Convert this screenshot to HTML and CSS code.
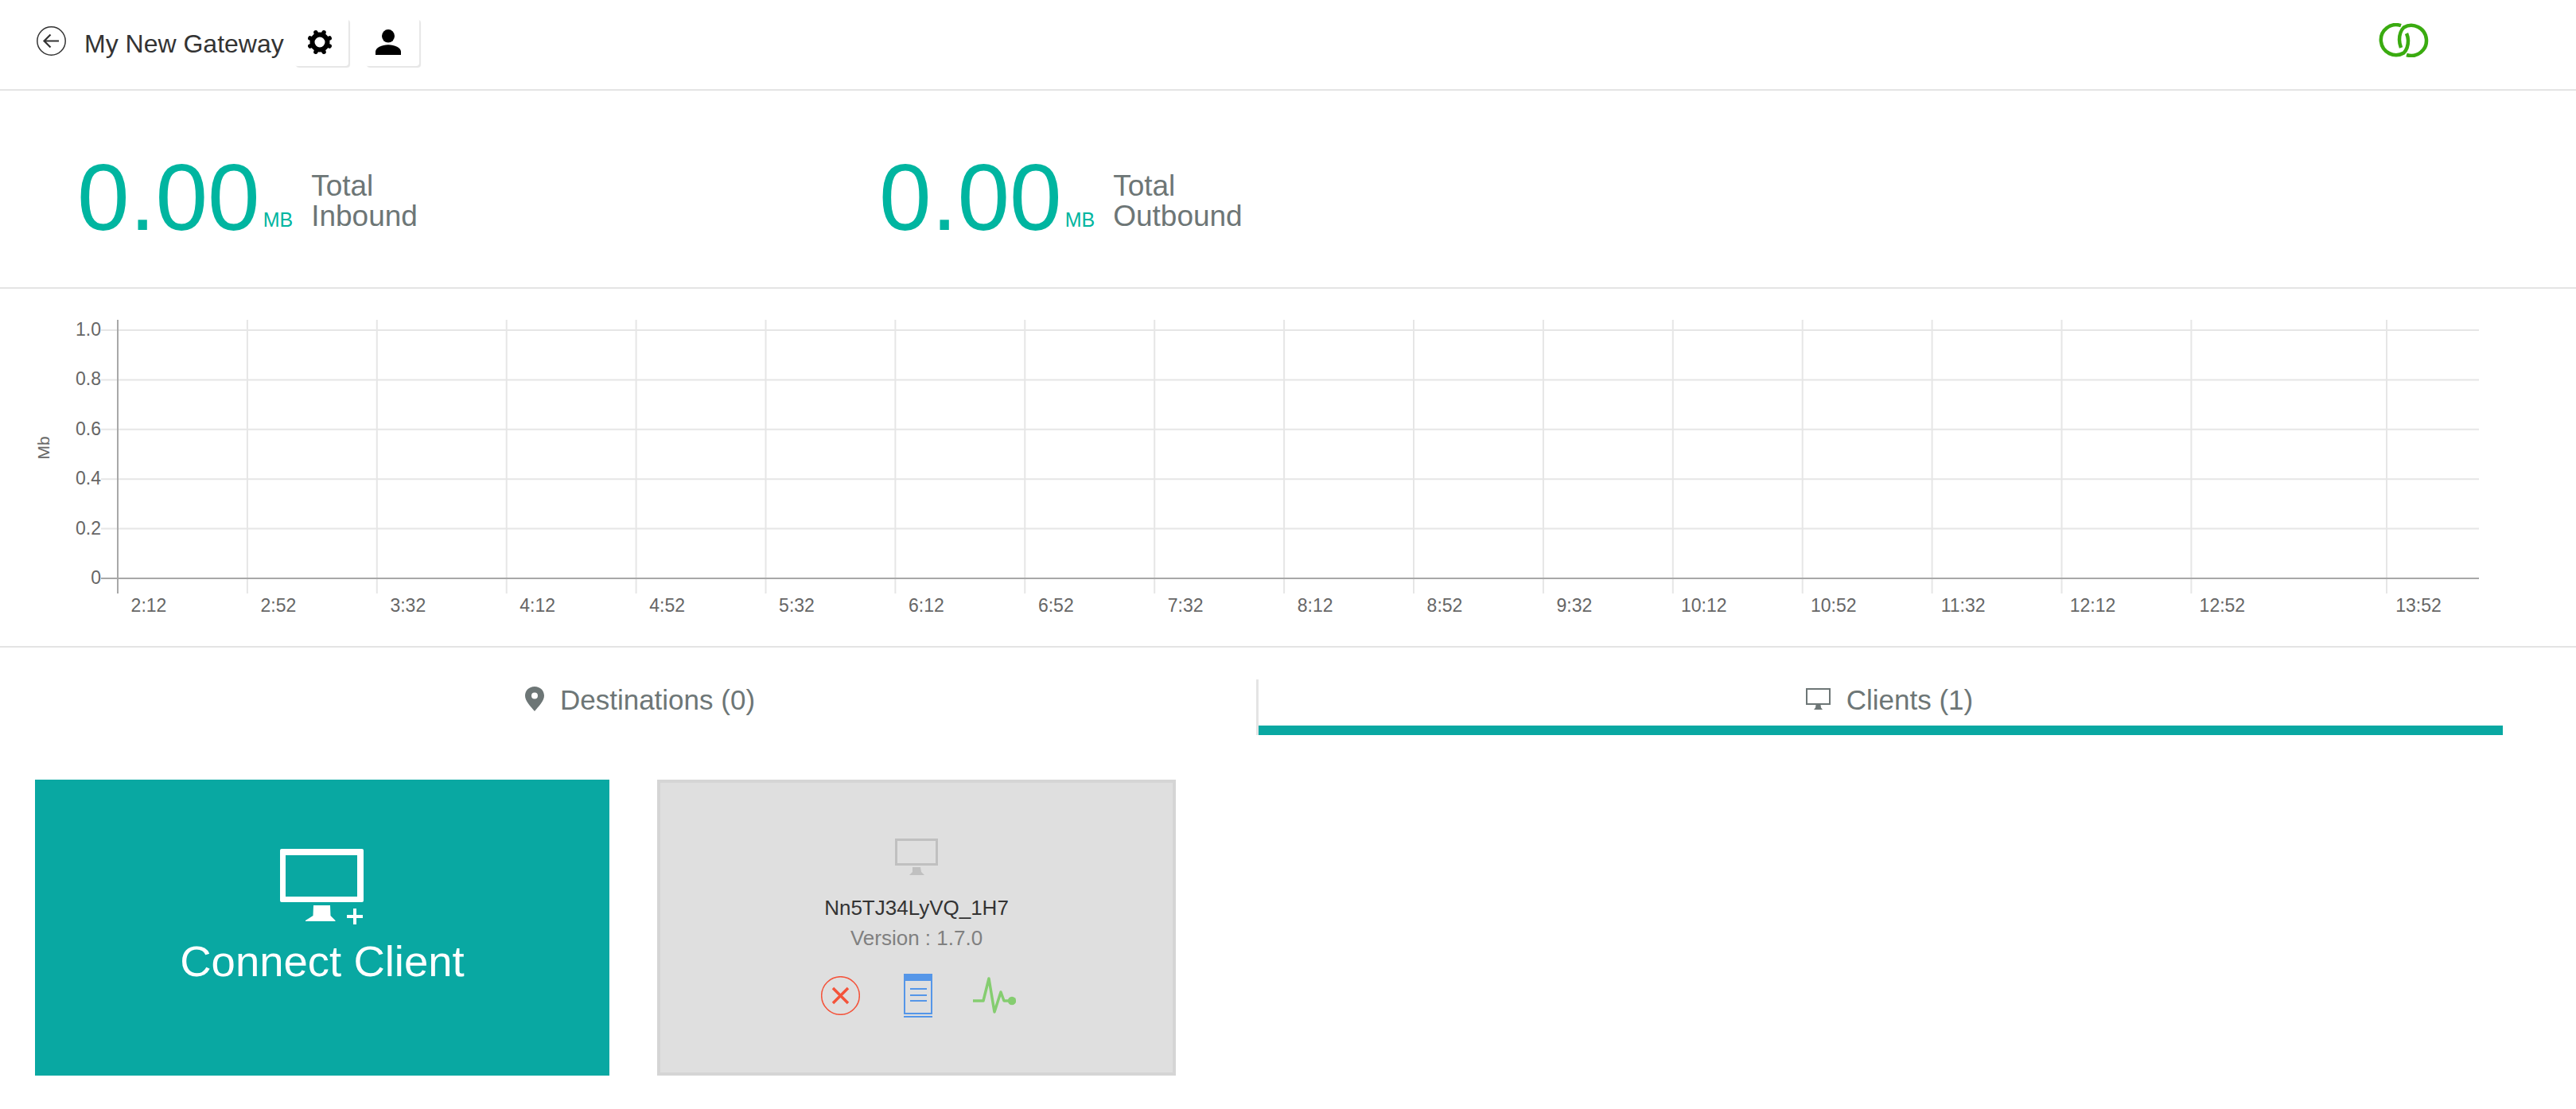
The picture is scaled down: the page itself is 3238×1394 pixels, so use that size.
FILE: index.html
```html
<!DOCTYPE html>
<html lang="en">
<head>
  <meta charset="UTF-8" />
  <title>My New Gateway</title>
  <link rel="stylesheet" href="styles.css">
</head>
<body>

  <header class="topbar">
    <svg class="back-icon" viewBox="0 0 37 37" width="37" height="37">
      <circle cx="18.5" cy="18.5" r="17.7" fill="none" stroke="#333" stroke-width="1.5"/>
      <path d="M28 18.5H10M17.5 10.5L9.5 18.5L17.5 26.5" fill="none" stroke="#333" stroke-width="2.2"/>
    </svg>
    <h1 class="title">My New Gateway</h1>
    <button class="icon-btn btn-settings">
      <svg viewBox="-16 -16 32 32" width="32" height="32">
        <circle r="9.500" fill="none" stroke="#000" stroke-width="6"/>
        <g stroke="#000" stroke-width="5.500" stroke-linecap="round">
          <path d="M0-11V-13.200" transform="rotate(22.500)"/>
          <path d="M0-11V-13.200" transform="rotate(67.500)"/>
          <path d="M0-11V-13.200" transform="rotate(112.500)"/>
          <path d="M0-11V-13.200" transform="rotate(157.500)"/>
          <path d="M0-11V-13.200" transform="rotate(202.500)"/>
          <path d="M0-11V-13.200" transform="rotate(247.500)"/>
          <path d="M0-11V-13.200" transform="rotate(292.500)"/>
          <path d="M0-11V-13.200" transform="rotate(337.500)"/>
        </g>
      </svg>
    </button>
    <button class="icon-btn btn-user">
      <svg viewBox="0 0 32 32" width="32" height="32">
        <ellipse cx="16" cy="8.300" rx="8" ry="8.300" fill="#000"/>
        <path fill="#000" d="M0 32v-4C0 23 8 19.300 16 19.300S32 23 32 28v4z"/>
      </svg>
    </button>
    <svg class="logo" viewBox="0 0 65 43" width="65" height="43">
      <g fill="none" stroke="#3aab10" stroke-width="4.500">
        <path d="M29 3.200A19 19 0 1 0 32.500 37.500C36 34 38 29 38 22C38 19 37.500 16.500 36 13"/>
        <path d="M36 40A19 19 0 1 0 32.500 5.500C29 9 27 14 27 21C27 24 27.500 27 29 31"/>
      </g>
    </svg>
  </header>

  <section class="stats">
    <div class="stat">
      <span class="stat-value">0.00</span>
      <span class="stat-unit">MB</span>
      <span class="stat-label">Total<br>Inbound</span>
    </div>
    <div class="stat">
      <span class="stat-value">0.00</span>
      <span class="stat-unit">MB</span>
      <span class="stat-label">Total<br>Outbound</span>
    </div>
  </section>

  <section class="chart">
    <svg id="traffic-chart" viewBox="0 0 3238 449" width="3238" height="449"></svg>
  </section>

  <nav class="tabs">
    <a class="tab tab-destinations">
      <svg viewBox="0 0 24 31" width="24" height="31">
        <path fill="#6d7676" fill-rule="evenodd" d="M12 0C5 0 0 5 0 11.500C0 18 7 25 12 31C17 25 24 18 24 11.500C24 5 19 0 12 0zM12 7.500a4 4 0 1 1 0 8 4 4 0 0 1 0-8z"/>
      </svg>
      Destinations (0)
    </a>
    <a class="tab tab-clients active">
      <svg viewBox="0 0 31 27" width="31" height="27">
        <path fill="#6d7676" fill-rule="evenodd" d="M0 0h31v21H0zM2 2v17h27V2z"/>
        <path fill="#6d7676" d="M12.500 21h6l.5 3.500 2 2.500H10l2-2.500z"/>
      </svg>
      Clients (1)
    </a>
  </nav>

  <section class="cards">
    <div class="card card-connect">
      <svg viewBox="0 0 105 95" width="105" height="95">
        <path fill="#fff" fill-rule="evenodd" d="M2 0h101a2 2 0 0 1 2 2v63a2 2 0 0 1-2 2H2a2 2 0 0 1-2-2V2a2 2 0 0 1 2-2zM7 8v52h90V8z"/>
        <path fill="#fff" d="M42 71h21l.5 13 6 6v1H32v-1l9.500-6z"/>
        <path fill="#fff" d="M92 75h4v8h8v4h-8v8h-4v-8h-8v-4h8z"/>
      </svg>
      <div class="connect-text">Connect Client</div>
    </div>

    <div class="card card-client">
      <svg class="client-monitor" viewBox="0 0 54 46" width="54" height="46">
        <path fill="#c0c0c0" fill-rule="evenodd" d="M0 0h54v34H0zM3 3v28h48V3z"/>
        <path fill="#c0c0c0" d="M22 36h10l1 6 4 4H18l4-4z"/>
      </svg>
      <div class="client-name">Nn5TJ34LyVQ_1H7</div>
      <div class="client-version">Version : 1.7.0</div>
      <div class="client-actions">
        <svg class="action-stop" viewBox="0 0 49 49" width="49" height="49">
          <circle cx="24.500" cy="24.500" r="23.800" fill="none" stroke="#f4533a" stroke-width="1.500"/>
          <path d="M15 15L34 34M34 15L15 34" stroke="#f4533a" stroke-width="3.500"/>
        </svg>
        <svg viewBox="0 0 36 55" width="36" height="55">
          <path fill="#5596e8" d="M0 0h36v9H0z"/>
          <path fill="none" stroke="#5596e8" stroke-width="2" d="M1 9v41h34V9"/>
          <path fill="#5596e8" d="M0 53h36v2H0z"/>
          <path stroke="#5596e8" stroke-width="2" d="M8 19h21M8 27h21M8 34h21"/>
        </svg>
        <svg viewBox="0 0 54 47" width="54" height="47">
          <path fill="none" stroke="#85cd70" stroke-width="3.500" stroke-linejoin="round" d="M0 30h13L20 2l7 42 8-25 4 11h10"/>
          <circle cx="49" cy="30" r="5.200" fill="#85cd70"/>
        </svg>
      </div>
    </div>
  </section>

  <script>
    // Grafiek tekenen
    const svg = document.getElementById('traffic-chart');
    const top0 = 52, step = 62.4, left = 148, right = 3116;
    const labels = ['2:12','2:52','3:32','4:12','4:52','5:32','6:12','6:52','7:32','8:12','8:52','9:32','10:12','10:52','11:32','12:12','12:52','13:52'];
    const yLabels = ['1.0','0.8','0.6','0.4','0.2','0'];
    let out = '';
    labels.forEach((l, i) => {
      const x = i < 17 ? left + i * 162.9 : 3000;
      if(i > 0) out += `<line class="grid" x1="${x}" x2="${x}" y1="39" y2="383"/>`;
      const cx = i < 17 ? x + 39 : 3040;
      out += `<text class="tick" x="${cx}" y="406" text-anchor="middle">${l}</text>`;
    });
    yLabels.forEach((l, i) => {
      const y = top0 + i * step;
      out += `<line class="${i === 5 ? 'axis' : 'grid'}" x1="127" x2="${right}" y1="${y}" y2="${y}"/>`;
      out += `<text class="tick" x="127" y="${y + 7}" text-anchor="end">${l}</text>`;
    });
    out += `<line class="axis" x1="148" x2="148" y1="39" y2="383"/>`;
    out += `<text class="axis-title" transform="translate(62 200) rotate(-90)" text-anchor="middle">Mb</text>`;
    svg.innerHTML = out;
  </script>

</body>
</html>
```

FILE: styles.css
```css
/* Algemeen */
body {
  margin: 0;
  font-family: 'Liberation Sans', Arial, sans-serif;
  background: #fff;
  color: #333;
}
/* Top balk */
.topbar {
  display: flex;
  align-items: center;
  height: 112px;
  padding-left: 46px;
  padding-right: 184px;
  border-bottom: 2px solid #e4e4e4;
}
.back-icon {
  margin-bottom: 9px;
}
.title {
  margin: 0 13px 2px 23px;
  font-size: 32px;
  font-weight: normal;
  color: #333;
}
.icon-btn {
  display: flex;
  align-items: center;
  justify-content: center;
  width: 68px;
  height: 60px;
  margin-right: 21px;
  margin-bottom: 6px;
  padding: 0;
  background: #fff;
  border: none;
  border-radius: 4px;
  box-shadow: 2px 2px 1px #e6e6e6;
}
.btn-settings {
  padding-right: 4px;
}
.btn-user {
  padding-right: 10px;
}
.logo {
  margin-left: auto;
  margin-top: -11px;
}
/* Totalen */
.stats {
  display: flex;
  height: 247px;
  padding-left: 97px;
  border-bottom: 2px solid #e4e4e4;
}
.stat {
  display: flex;
  align-items: flex-end;
  width: 1008px;
  padding-bottom: 70px;
}
.stat-value {
  margin-bottom: -7px;
  font-size: 118px;
  line-height: 100px;
  color: #00b5a0;
}
.stat-unit {
  margin-left: 4px;
  font-size: 25px;
  line-height: 30px;
  color: #00b5a0;
}
.stat-label {
  margin-left: 23px;
  font-size: 37px;
  line-height: 38px;
  color: #6d7676;
}
/* Grafiek */
.chart {
  height: 449px;
  border-bottom: 2px solid #e4e4e4;
}
.chart svg {
  display: block;
}
.grid {
  stroke: #e6e6e6;
  stroke-width: 2;
}
.axis {
  stroke: #a8a8a8;
  stroke-width: 2;
}
.tick {
  font-size: 23px;
  fill: #666;
}
.axis-title {
  font-size: 21px;
  fill: #666;
}
/* Tabs */
.tabs {
  display: flex;
  height: 70px;
  margin-top: 40px;
  padding-right: 92px;
}
.tab {
  display: flex;
  align-items: flex-start;
  justify-content: center;
  gap: 20px;
  box-sizing: border-box;
  height: 70px;
  padding-top: 6px;
  font-size: 35px;
  line-height: 40px;
  color: #6d7676;
}
.tab-destinations {
  width: 1579px;
  padding-left: 30px;
}
.tab-destinations svg {
  margin-top: 3px;
}
.tab-clients {
  flex: 1;
  padding-left: 22px;
  border-left: 3px solid #e4e4e4;
}
.tab-clients svg {
  margin-top: 5px;
}
.tab.active {
  position: relative;
}
.tab.active::after {
  content: '';
  position: absolute;
  left: 0;
  right: 0;
  bottom: 0;
  height: 12px;
  background: #09a8a2;
}
/* Kaarten */
.cards {
  display: flex;
  gap: 60px;
  padding: 56px 44px 42px;
}
.card {
  display: flex;
  flex-direction: column;
  align-items: center;
  box-sizing: border-box;
  height: 372px;
}
.card-connect {
  width: 722px;
  padding-top: 87px;
  background: #09a8a2;
}
.card-connect svg {
  margin-left: -2px;
}
.connect-text {
  margin-top: 17px;
  font-size: 54.500px;
  line-height: 60px;
  color: #fff;
}
.card-client {
  width: 652px;
  padding-top: 70px;
  background: #dfdfdf;
  border: 4px solid #d5d5d5;
}
.client-name {
  margin-top: 23px;
  font-size: 26px;
  line-height: 36px;
  color: #333;
}
.client-version {
  margin-top: 2px;
  font-size: 26px;
  line-height: 36px;
  color: #808080;
}
.client-actions {
  display: flex;
  align-items: center;
  gap: 51px;
  margin-top: 27px;
  margin-left: 5px;
}
.action-stop {
  margin-right: 4px;
}
```
